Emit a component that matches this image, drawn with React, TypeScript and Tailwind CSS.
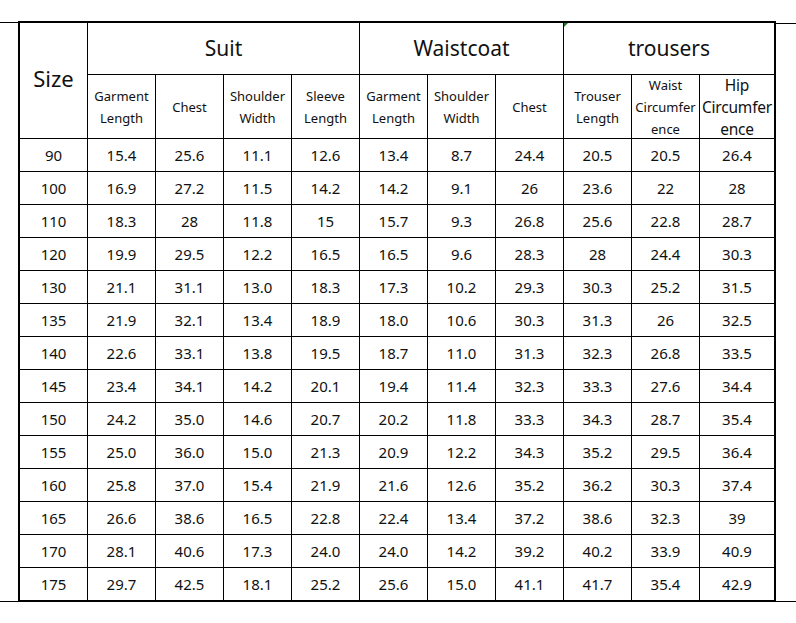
import React from "react";

const rows: string[][] = [
  ["90", "15.4", "25.6", "11.1", "12.6", "13.4", "8.7", "24.4", "20.5", "20.5", "26.4"],
  ["100", "16.9", "27.2", "11.5", "14.2", "14.2", "9.1", "26", "23.6", "22", "28"],
  ["110", "18.3", "28", "11.8", "15", "15.7", "9.3", "26.8", "25.6", "22.8", "28.7"],
  ["120", "19.9", "29.5", "12.2", "16.5", "16.5", "9.6", "28.3", "28", "24.4", "30.3"],
  ["130", "21.1", "31.1", "13.0", "18.3", "17.3", "10.2", "29.3", "30.3", "25.2", "31.5"],
  ["135", "21.9", "32.1", "13.4", "18.9", "18.0", "10.6", "30.3", "31.3", "26", "32.5"],
  ["140", "22.6", "33.1", "13.8", "19.5", "18.7", "11.0", "31.3", "32.3", "26.8", "33.5"],
  ["145", "23.4", "34.1", "14.2", "20.1", "19.4", "11.4", "32.3", "33.3", "27.6", "34.4"],
  ["150", "24.2", "35.0", "14.6", "20.7", "20.2", "11.8", "33.3", "34.3", "28.7", "35.4"],
  ["155", "25.0", "36.0", "15.0", "21.3", "20.9", "12.2", "34.3", "35.2", "29.5", "36.4"],
  ["160", "25.8", "37.0", "15.4", "21.9", "21.6", "12.6", "35.2", "36.2", "30.3", "37.4"],
  ["165", "26.6", "38.6", "16.5", "22.8", "22.4", "13.4", "37.2", "38.6", "32.3", "39"],
  ["170", "28.1", "40.6", "17.3", "24.0", "24.0", "14.2", "39.2", "40.2", "33.9", "40.9"],
  ["175", "29.7", "42.5", "18.1", "25.2", "25.6", "15.0", "41.1", "41.7", "35.4", "42.9"],
];

const sub: string[][] = [
  ["Garment", "Length"],
  ["Chest"],
  ["Shoulder", "Width"],
  ["Sleeve", "Length"],
  ["Garment", "Length"],
  ["Shoulder", "Width"],
  ["Chest"],
  ["Trouser", "Length"],
  ["Waist", "Circumfer", "ence"],
];

export default function App() {
  return (
    <div
      className="w-[796px] h-[623px] bg-white text-[#111] pt-[21px]"
      style={{ fontFamily: '"Noto Sans", "Open Sans", sans-serif' }}
    >
      <div className="flex">
        <div className="w-[18px] mt-[1px] border-t border-b border-black" />
        <div className="border-2 border-black bg-black">
          <div className="grid gap-[1px] grid-cols-[repeat(10,67px)_74px] grid-rows-[51px_63px_repeat(14,32px)]">
            <div className="row-span-2 bg-white flex items-center justify-center text-[22px] pb-[5px]">
              Size
            </div>
            <div className="col-span-4 bg-white flex items-center justify-center text-[21px]">Suit</div>
            <div className="col-span-3 bg-white flex items-center justify-center text-[21px]">Waistcoat</div>
            <div className="relative col-span-3 bg-white flex items-center justify-center text-[21px]">
              trousers
              <div className="absolute left-0 top-0 w-0 h-0 border-t-[4px] border-r-[4px] border-t-[#1f7a2e] border-r-transparent" />
            </div>
            {sub.map((s, i) => (
              <div
                key={i}
                className="bg-white flex flex-col items-center justify-center text-[13px] leading-[22px] whitespace-nowrap"
              >
                {s.map((l, j) => (
                  <span key={j}>{l}</span>
                ))}
              </div>
            ))}
            <div className="bg-white flex flex-col items-center justify-center text-[15.5px] leading-[22px] whitespace-nowrap tracking-[-0.2px]">
              <span>Hip</span>
              <span>Circumfer</span>
              <span>ence</span>
            </div>
            {rows.map((r, i) =>
              r.map((v, j) => (
                <div
                  key={`${i}-${j}`}
                  className="bg-white flex items-center justify-center text-[15px]"
                >
                  {v}
                </div>
              ))
            )}
          </div>
        </div>
        <div className="flex-1 mt-[2px] border-t border-b border-black" />
      </div>
    </div>
  );
}
